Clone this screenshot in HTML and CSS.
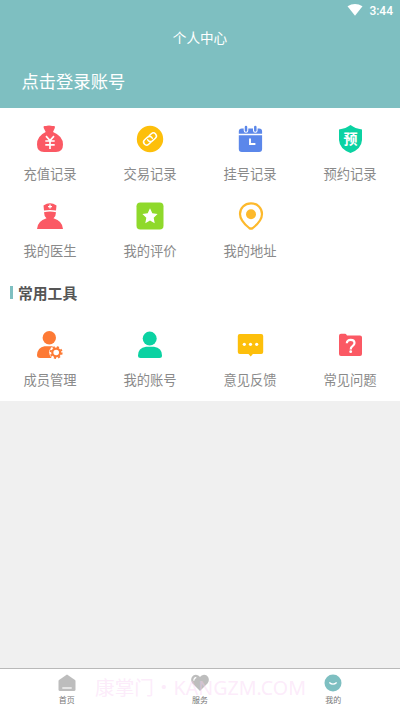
FILE: index.html
```html
<!DOCTYPE html>
<html lang="zh-CN">
<head>
<meta charset="utf-8">
<title>个人中心</title>
<link rel="stylesheet" href="styles.css">
</head>
<body>
<div class="app">
  <header class="header">
    <div class="status">
      <svg class="wifi" viewBox="0 0 16 12"><path d="M.5 2.3Q8-2.3 15.500 2.300L8 11.800Z" fill="#fff"/></svg>
      <span>3:44</span>
    </div>
    <h1 class="title">个人中心</h1>
    <div class="login">点击登录账号</div>
  </header>
  <main class="panel">
    <div class="grid">
      <a class="tile">
        <svg class="icon" viewBox="0 0 32 32"><path d="M9.700 5Q9 3.200 10.500 3Q12 3.200 13 2.800Q15 2.200 17 2.800Q18.500 3.200 20 3Q21.500 3.200 20.800 5L19 9Q29 13 29 21.500Q29 29 22 29H10Q3 29 3 21.500Q3 13 11.700 9Z" fill="#fb5964"/><path d="M12 13.200l4 4.300 4-4.300M11.300 18h9.400M11.300 21.800h9.400M16 18v8" fill="none" stroke="#fff" stroke-width="1.700"/></svg>
        <span>充值记录</span>
      </a>
      <a class="tile">
        <svg class="icon" viewBox="0 0 32 32"><circle cx="16" cy="16" r="13.200" fill="#fdbf0b"/><g transform="rotate(-42 16 16)" fill="none" stroke="#fff" stroke-width="1.500" stroke-linecap="round"><path d="M14.500 19H11.500a3 3 0 0 1 0-6H15.500a3 3 0 0 1 2.700 4M17.500 13H20.500a3 3 0 0 1 0 6H16.500a3 3 0 0 1-2.700-4"/></g></svg>
        <span>交易记录</span>
      </a>
      <a class="tile">
        <svg class="icon" viewBox="0 0 32 32"><path d="M4.800 10.700V8.500q0-3 3-3h17.300q3 0 3 3v2.200zM4.800 12.300h23.300V26q0 3-3 3H7.800q-3 0-3-3z" fill="#5b87ea"/><path d="M12 4.300v3.200M21.300 4.300v3.200" stroke="#fff" stroke-width="4.600" stroke-linecap="round"/><path d="M12 4v3.500M21.300 4v3.500" stroke="#5b87ea" stroke-width="2.500" stroke-linecap="round"/><path d="M16 15.500v5.500h5.400" fill="none" stroke="#fff" stroke-width="1.900"/></svg>
        <span>挂号记录</span>
      </a>
      <a class="tile">
        <svg class="icon" viewBox="0 0 32 32"><path d="M16.500 2Q21 5.500 28 6.500V17Q27.500 26 16.500 30Q5.500 26 5 17V6.500Q12 5.500 16.500 2Z" fill="#0bd2a2"/><text class="glyph" x="16.500" y="20.800" text-anchor="middle">预</text></svg>
        <span>预约记录</span>
      </a>
      <a class="tile">
        <svg class="icon" viewBox="0 0 32 32"><path d="M9.500 5.500Q16 1.200 22.500 5.500L22 10.500Q16 9.300 10 10.500ZM10 12.200Q16 10.800 22 12.200Q22 16 19.500 18.300Q28.500 21 29 29H3Q3.500 21 12.500 18.300Q10 16 10 12.200Z" fill="#fb5964"/><path d="M16 4.600v4M14 6.600h4" stroke="#fff" stroke-width="1.300"/></svg>
        <span>我的医生</span>
      </a>
      <a class="tile">
        <svg class="icon" viewBox="0 0 32 32"><rect x="2.500" y="2.500" width="27" height="27" rx="3.800" fill="#8fd92b"/><path d="M16 8.300l2.300 5 5.300.7-3.900 3.800 1 5.500-4.700-2.700-4.700 2.700 1-5.500-3.900-3.800 5.300-.7z" fill="#fff"/></svg>
        <span>我的评价</span>
      </a>
      <a class="tile">
        <svg class="icon" viewBox="0 0 32 32"><path d="M17 3.400c-6.500 0-11 4.600-11 10.600 0 5.500 5 10.700 9.200 14q1.800 1.300 3.600 0C23 24.700 28 19.500 28 14c0-6-4.500-10.600-11-10.600z" fill="none" stroke="#fdb92c" stroke-width="2.200"/><circle cx="17" cy="14.300" r="5" fill="#fdb92c"/></svg>
        <span>我的地址</span>
      </a>
    </div>
    <h2 class="section">常用工具</h2>
    <div class="grid">
      <a class="tile">
        <svg class="icon" viewBox="0 0 32 32"><circle cx="15.300" cy="8.800" r="6.700" fill="#fd7a35"/><path d="M10.500 17.300H20q3 0 4.500 2V29H6q-3 0-3-3Q3.500 18.500 10.500 17.300Z" fill="#fd7a35"/><circle cx="22.200" cy="23.500" r="7" fill="#fff"/><circle cx="22.200" cy="23.500" r="3.900" fill="none" stroke="#fd7a35" stroke-width="2.200"/><circle cx="22.200" cy="23.500" r="5.500" fill="none" stroke="#fd7a35" stroke-width="1.800" stroke-dasharray="2.160 2.160"/></svg>
        <span>成员管理</span>
      </a>
      <a class="tile">
        <svg class="icon" viewBox="0 0 32 32"><circle cx="15.700" cy="9.600" r="7" fill="#0bd2a2"/><path d="M12 17.800h8q8 1.200 8 8.700 0 2.500-2.500 2.500h-19Q4 29 4 26.500q0-7.500 8-8.700z" fill="#0bd2a2"/></svg>
        <span>我的账号</span>
      </a>
      <a class="tile">
        <svg class="icon" viewBox="0 0 32 32"><path d="M5.800 5h21.400q2 0 2 2v16q0 2-2 2h-8.300l-2.200 2.500-2.200-2.500H5.800q-2 0-2-2V7q0-2 2-2z" fill="#fdbf0b"/><g fill="#fff"><circle cx="10.300" cy="15.300" r="1.600"/><circle cx="16.500" cy="15.300" r="1.600"/><circle cx="22.700" cy="15.300" r="1.600"/></g></svg>
        <span>意见反馈</span>
      </a>
      <a class="tile">
        <svg class="icon" viewBox="0 0 32 32"><path d="M7 4.700h4q1 0 1.500 1l.5.900H26q2 0 2 2V25q0 2-2 2H7q-2 0-2-2V6.700q0-2 2-2z" fill="#fb5964"/><path d="M12.800 14.300q.2-3.500 3.900-3.500 3.800 0 3.800 3.300 0 1.800-2 3-1.800 1.100-1.800 3.300" fill="none" stroke="#fff" stroke-width="2.200"/><circle cx="16.700" cy="22.700" r="1.400" fill="#fff"/></svg>
        <span>常见问题</span>
      </a>
    </div>
  </main>
  <nav class="tabs">
    <a class="tab">
      <svg class="tab-icon" viewBox="0 0 18 18"><path d="M9 .5L17 6q.5.500.5 1v8.500q0 1.500-1.500 1.500H2Q.5 17 .5 15.500V7q0-.5.500-1z" fill="#bdbdbd"/><path d="M4.300 14h9.400" stroke="#fff" stroke-width="1.200"/></svg>
      <span>首页</span>
    </a>
    <a class="tab">
      <svg class="tab-icon" viewBox="0 0 18 18"><path d="M9 17L1.300 9.300Q-.8 6.200.9 3.100 2.800.2 6 .9 8 1.400 9 3 10 1.400 12 .9 15.200.2 17.100 3.100 18.800 6.200 16.700 9.300Z" fill="#bdbdbd"/><path d="M2.800 6.800Q2.800 4 5.300 3.400" fill="none" stroke="#fff" stroke-width="1.100"/></svg>
      <span>服务</span>
    </a>
    <a class="tab">
      <svg class="tab-icon" viewBox="0 0 18 18"><circle cx="9" cy="9" r="8.500" fill="#7ebfc1"/><path d="M5.300 8.500Q9 11.800 12.700 8.500" fill="none" stroke="#fff" stroke-width="1.300"/></svg>
      <span>我的</span>
    </a>
    <div class="watermark">康掌门・KANGZM.COM</div>
  </nav>
</div>
</body>
</html>
```
FILE: styles.css
```css
* {
  box-sizing: border-box;
}

body {
  margin: 0;
  font-family: "Noto Sans CJK SC", sans-serif;
}

.app {
  display: flex;
  flex-direction: column;
  height: 710px;
  background: #f0f0f0;
}

.header {
  height: 108px;
  background: #7ebfc1;
  color: #fff;
}

.status {
  display: flex;
  align-items: center;
  justify-content: flex-end;
  gap: 6px;
  height: 22px;
  padding-right: 7px;
  font: 500 12px/22px Roboto, sans-serif;
}

.wifi {
  width: 16px;
  height: 12px;
  margin-bottom: 2px;
}

.title {
  margin: 0;
  padding-top: 5px;
  font-size: 13.6px;
  font-weight: 400;
  line-height: 20px;
  text-align: center;
}

.login {
  padding: 21px 0 0 21.5px;
  font-size: 17.3px;
  line-height: 26px;
}

.panel {
  height: 292.5px;
  background: #fff;
}

.grid {
  display: grid;
  grid-template-columns: repeat(4, 1fr);
}

.tile {
  display: flex;
  flex-direction: column;
  align-items: center;
  gap: 9px;
  height: 76.5px;
  padding-top: 15px;
  color: #8a8a8a;
  font-size: 13.3px;
  line-height: 20px;
}

.icon {
  width: 32px;
  height: 32px;
}

.glyph {
  fill: #fff;
  font-size: 14px;
  font-weight: 700;
}

.section {
  display: flex;
  align-items: center;
  gap: 5px;
  height: 44px;
  margin: 8.5px 0 0;
  padding: 2px 0 0 10px;
  color: #555;
  font-size: 14.8px;
  font-weight: 700;
}

.section::before {
  content: "";
  width: 3px;
  height: 13px;
  background: #7ebfc1;
}

.tabs {
  position: relative;
  display: flex;
  height: 42px;
  margin-top: auto;
  border-top: 1px solid #b9b9b9;
  background: #fff;
}

.tab {
  display: flex;
  flex: 1;
  flex-direction: column;
  align-items: center;
  padding-top: 5px;
  color: #777;
  font-size: 8px;
  line-height: 16px;
}

.tab-icon {
  width: 18px;
  height: 18px;
}

.watermark {
  position: absolute;
  top: 5px;
  left: 95px;
  color: rgba(248, 205, 244, 0.4);
  font-family: "Noto Sans", "Noto Sans CJK SC", sans-serif;
  font-size: 19.65px;
  line-height: 28px;
  white-space: nowrap;
}
```
